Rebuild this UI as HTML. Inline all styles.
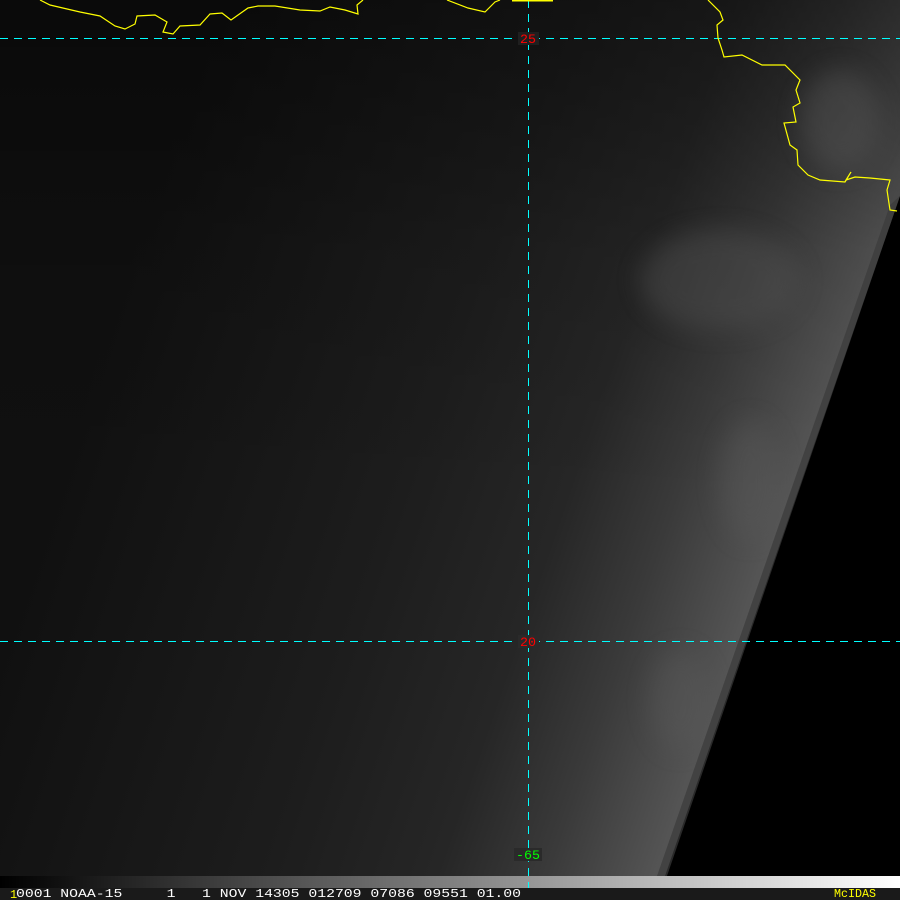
<!DOCTYPE html>
<html><head><meta charset="utf-8"><style>
html,body{margin:0;padding:0;background:#000;width:900px;height:900px;overflow:hidden}
svg{display:block}
</style></head><body>
<svg width="900" height="900" viewBox="0 0 900 900" xmlns="http://www.w3.org/2000/svg">
<defs>
<linearGradient id="bg" gradientUnits="userSpaceOnUse" x1="100" y1="350" x2="800" y2="590">
<stop offset="0" stop-color="#101010"/>
<stop offset="0.45" stop-color="#1d1d1d"/>
<stop offset="0.66" stop-color="#262626"/>
<stop offset="0.8" stop-color="#3a3a3a"/>
<stop offset="0.95" stop-color="#565656"/>
<stop offset="1" stop-color="#4a4a4a"/>
</linearGradient>
<linearGradient id="vt" x1="0" y1="0" x2="0" y2="1">
<stop offset="0" stop-color="#000" stop-opacity="0.4"/>
<stop offset="0.5" stop-color="#000" stop-opacity="0.1"/>
<stop offset="1" stop-color="#000" stop-opacity="0"/>
</linearGradient>
<linearGradient id="bar" x1="0" y1="0" x2="1" y2="0">
<stop offset="0" stop-color="#000"/>
<stop offset="1" stop-color="#fff"/>
</linearGradient>
<filter id="bl"><feGaussianBlur stdDeviation="12"/></filter>
</defs>
<rect width="900" height="876" fill="url(#bg)"/>
<rect width="900" height="500" fill="url(#vt)"/>
<g filter="url(#bl)" opacity="0.4">
<ellipse cx="720" cy="280" rx="80" ry="50" fill="#555"/>
<ellipse cx="840" cy="120" rx="40" ry="50" fill="#5a5a5a"/>
<ellipse cx="750" cy="480" rx="30" ry="60" fill="#5a5a5a"/>
<ellipse cx="680" cy="700" rx="30" ry="50" fill="#5a5a5a"/>
</g>
<polygon points="900,196 900,876 665,876" fill="#000"/>
<polygon points="890,205 900,196 667,876 657,876" fill="#3a3a3a" opacity="0.7"/>
<rect x="0" y="876" width="900" height="12" fill="url(#bar)"/>
<rect x="0" y="888" width="900" height="12" fill="#1a1a1a"/>
<g stroke="#0ff" stroke-width="1" stroke-dasharray="8,6" fill="none">
<line x1="0" y1="38.5" x2="900" y2="38.5"/>
<line x1="0" y1="641.5" x2="900" y2="641.5"/>
<line x1="528.5" y1="0" x2="528.5" y2="888"/>
</g>
<g stroke="#ff0" stroke-width="1.2" fill="none">
<polyline points="40,0 50,5 80,12 100,16 115,26 125,29 135,24 137,16 155,15 167,22 163,32 173,34 180,26 200,25 210,14 222,13 231,20 248,8 258,6 275,6 300,10 320,11 330,7 345,10 358,14 357,5 363,0"/>
<polyline points="447,0 468,8 485,12 495,2 500,0"/>
<polyline points="708,0 720,12 723,20 717,25 718,38 722,50 724,57 742,55 762,65 785,65 800,80 796,90 800,103 793,107 796,122 784,123 790,145 797,150 798,165 808,175 820,180 845,182 851,172 846,180 855,177 870,178 890,180 887,190 890,210 897,211"/>
<line x1="512" y1="0.5" x2="553" y2="0.5" stroke-width="2"/>
</g>
<rect x="518" y="32" width="21" height="13" fill="#1f1f1f"/>
<rect x="518" y="635" width="21" height="13" fill="#2a2a2a"/>
<rect x="514" y="848" width="28" height="13" fill="#2a2a2a"/>
<g font-family="Liberation Mono, monospace" font-size="13">
<text x="520" y="43" fill="#f00" textLength="16" lengthAdjust="spacingAndGlyphs">25</text>
<text x="520" y="646" fill="#f00" textLength="16" lengthAdjust="spacingAndGlyphs">20</text>
<text x="516" y="859" fill="#0f0" textLength="24" lengthAdjust="spacingAndGlyphs">-65</text>
<text x="10" y="898" fill="#ff0" font-size="12">1</text>
<text x="16" y="897" fill="#fff" font-size="12" textLength="505" lengthAdjust="spacingAndGlyphs" xml:space="preserve">0001 NOAA-15     1   1 NOV 14305 012709 07086 09551 01.00</text>
<text x="834" y="897" fill="#ff0" font-size="12" textLength="42" lengthAdjust="spacingAndGlyphs">McIDAS</text>
</g>
</svg>
</body></html>
